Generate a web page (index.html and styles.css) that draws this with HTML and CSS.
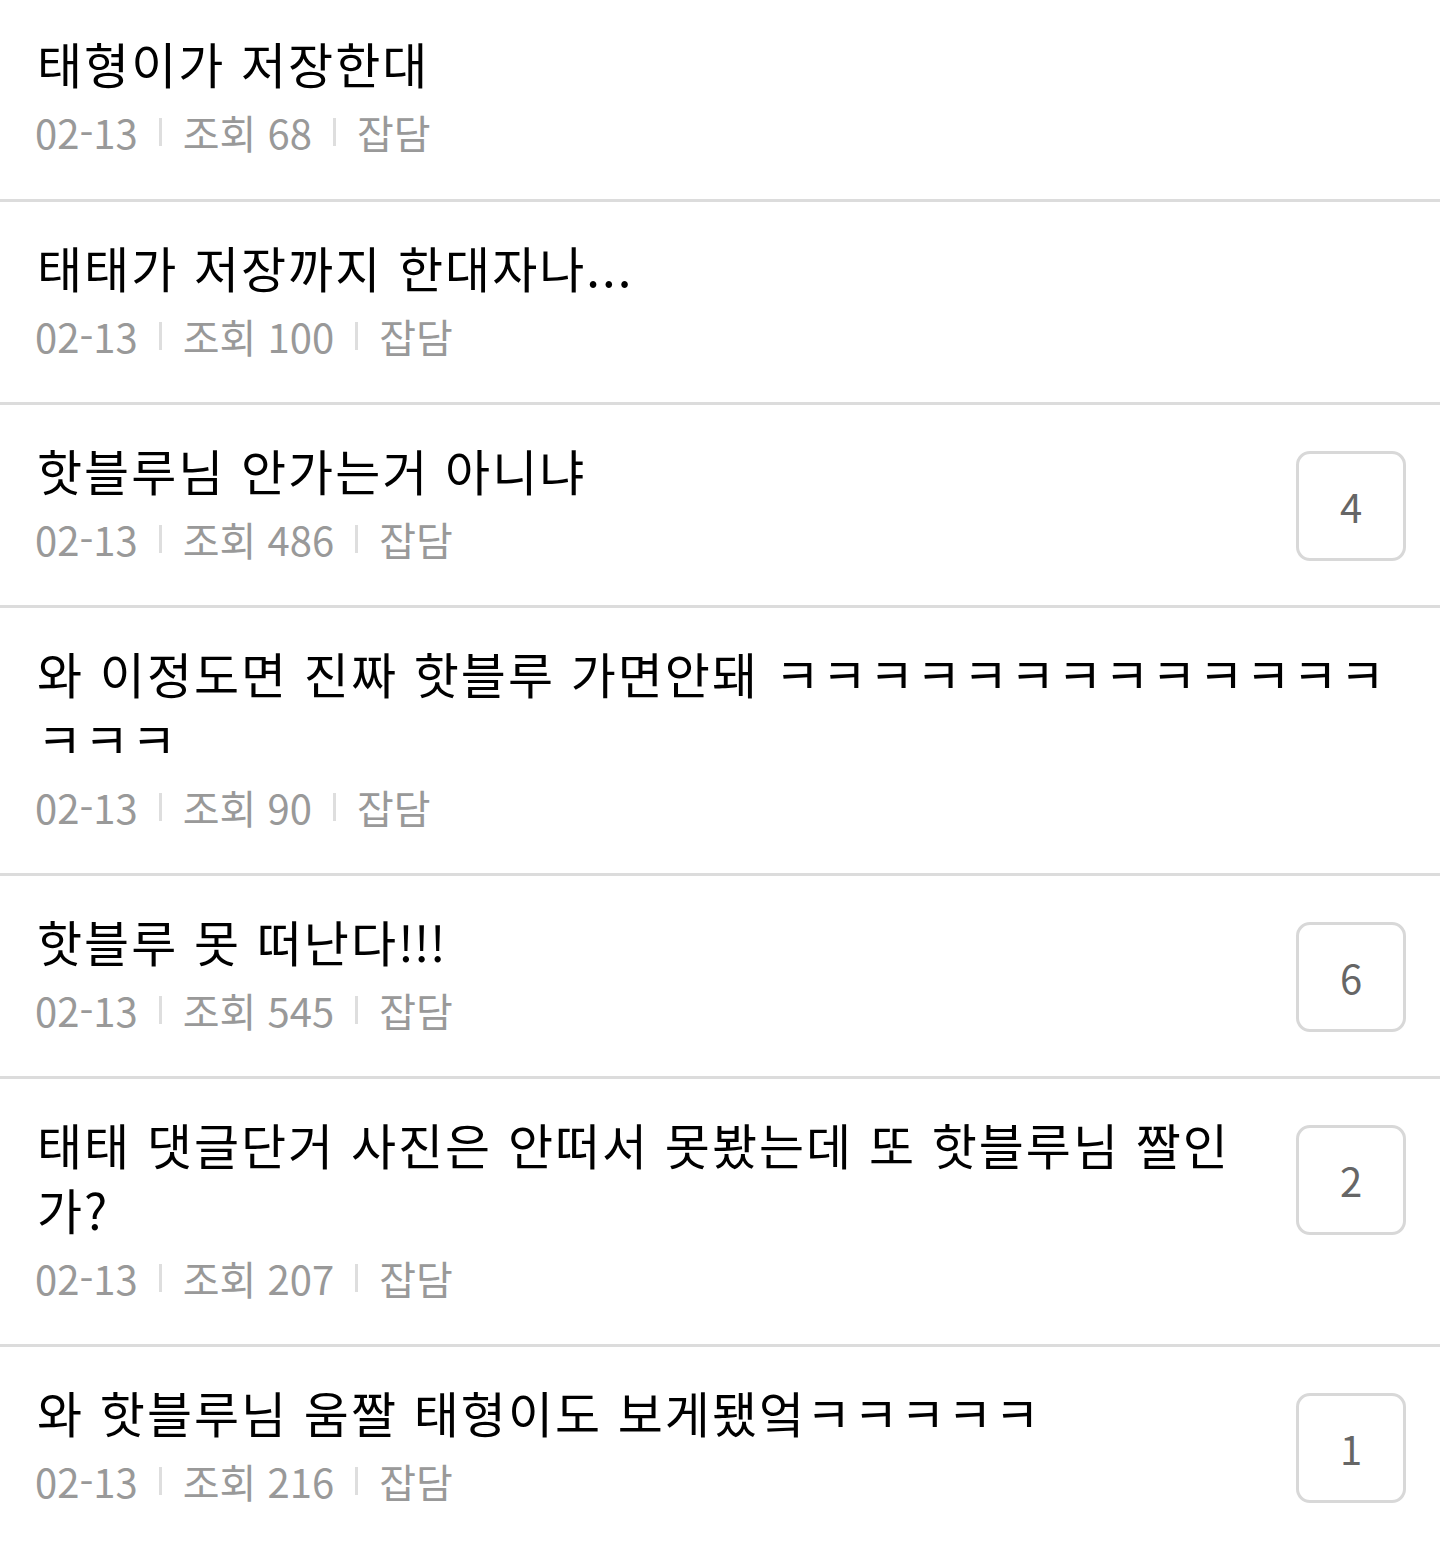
FILE: index.html
```html
<!DOCTYPE html>
<html lang="ko">

<head>
    <meta charset="UTF-8">
    <meta name="viewport" content="width=device-width, initial-scale=1.0">
    <title>잡담 게시판</title>
    <link rel="stylesheet" href="styles.css">
</head>

<body>
    <ul class="post-list">
        <li class="post">
            <div class="post-body">
                <p class="post-title">태형이가 저장한대</p>
                <p class="post-meta"><span>02-13</span><i class="bar"></i><span>조회 68</span><i class="bar"></i><span>잡담</span></p>
            </div>
        </li>

        <li class="post">
            <div class="post-body">
                <p class="post-title">태태가 저장까지 한대자나...</p>
                <p class="post-meta"><span>02-13</span><i class="bar"></i><span>조회 100</span><i class="bar"></i><span>잡담</span></p>
            </div>
        </li>

        <li class="post">
            <div class="post-body">
                <p class="post-title">핫블루님 안가는거 아니냐</p>
                <p class="post-meta"><span>02-13</span><i class="bar"></i><span>조회 486</span><i class="bar"></i><span>잡담</span></p>
            </div>
            <span class="comment-count">4</span>
        </li>

        <li class="post">
            <div class="post-body">
                <p class="post-title">와 이정도면 진짜 핫블루 가면안돼 ㅋㅋㅋㅋㅋㅋㅋㅋㅋㅋㅋㅋㅋㅋㅋㅋ</p>
                <p class="post-meta"><span>02-13</span><i class="bar"></i><span>조회 90</span><i class="bar"></i><span>잡담</span></p>
            </div>
        </li>

        <li class="post">
            <div class="post-body">
                <p class="post-title">핫블루 못 떠난다<span class="latin">!!!</span></p>
                <p class="post-meta"><span>02-13</span><i class="bar"></i><span>조회 545</span><i class="bar"></i><span>잡담</span></p>
            </div>
            <span class="comment-count">6</span>
        </li>

        <li class="post">
            <div class="post-body">
                <p class="post-title">태태 댓글단거 사진은 안떠서 못봤는데 또 핫블루님 짤인가?</p>
                <p class="post-meta"><span>02-13</span><i class="bar"></i><span>조회 207</span><i class="bar"></i><span>잡담</span></p>
            </div>
            <span class="comment-count">2</span>
        </li>

        <li class="post">
            <div class="post-body">
                <p class="post-title">와 핫블루님 움짤 태형이도 보게됐엌ㅋㅋㅋㅋㅋ</p>
                <p class="post-meta"><span>02-13</span><i class="bar"></i><span>조회 216</span><i class="bar"></i><span>잡담</span></p>
            </div>
            <span class="comment-count">1</span>
        </li>
    </ul>
</body>

</html>
```

FILE: styles.css
```css
/* Reset */
* {
    margin: 0;
    padding: 0;
    box-sizing: border-box;
}

body {
    font-family: "Noto Sans CJK KR", "Noto Sans", sans-serif;
    background: #fff;
    color: #000;
}

/* List */
.post-list {
    list-style: none;
}

.post {
    display: flex;
    align-items: flex-start;
    gap: 44px;
    padding: 32px 34px 41px 37px;
    border-bottom: 3px solid #dcdcdc;
}

.post:first-child {
    padding-top: 30px;
    padding-bottom: 42px;
}

.post-body {
    flex: 1;
    min-width: 0;
}

/* Title */
.post-title {
    font-size: 49px;
    line-height: 65px;
    letter-spacing: 2px;
    color: #000;
}

.post-title .latin {
    letter-spacing: 0;
}

/* Meta line */
.post-meta {
    display: flex;
    align-items: center;
    margin-top: 12px;
    margin-left: -2px;
    font-size: 40px;
    line-height: 50px;
    color: #999;
}

.bar {
    display: inline-block;
    width: 3px;
    height: 28px;
    margin: 0 21px;
    background: #dedede;
}

/* Comment count box */
.comment-count {
    flex: none;
    width: 110px;
    height: 110px;
    margin-top: 14px;
    display: flex;
    align-items: center;
    justify-content: center;
    border: 3px solid #d8d8d8;
    border-radius: 14px;
    font-size: 40px;
    color: #666;
}
```
